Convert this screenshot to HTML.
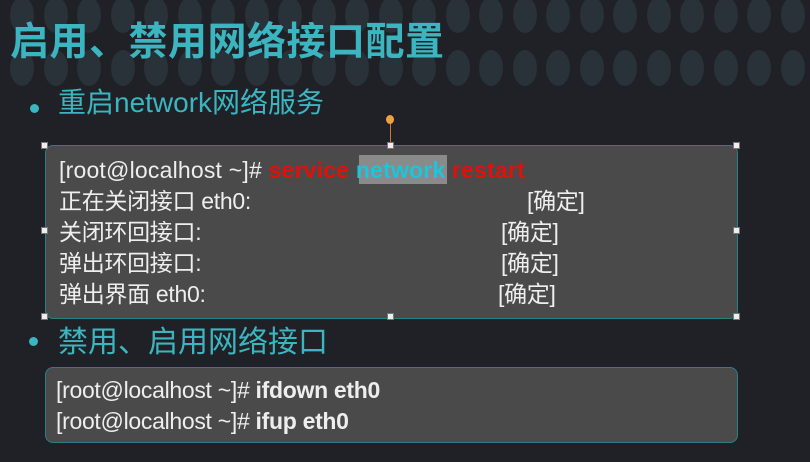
<!DOCTYPE html>
<html><head><meta charset="utf-8"><style>
body{margin:0;width:810px;height:462px;background:#202126;position:relative;overflow:hidden;font-family:"Liberation Sans Narrow","Liberation Sans","Noto Sans CJK SC",sans-serif}
.c{position:absolute;width:24px;height:36px;border-radius:50%;background:#283238}
.t{position:absolute;white-space:nowrap}
.box{position:absolute;background:#4a4a4a;border:1px solid #2a7f86;border-radius:8px}
.ln{position:absolute;color:#eee;font-size:23px;white-space:nowrap;line-height:26px;letter-spacing:-0.3px}
.h{position:absolute;width:5px;height:5px;background:#eee;border:1px solid #777}
.dot{position:absolute;width:9px;height:9px;border-radius:50%;background:#3bb5c0}
</style></head><body>
<div id="circ"></div>
<script>
var s='';for(var r=0;r<2;r++)for(var k=0;k<25;k++){s+='<div class="c" style="left:'+(10+k*33.5)+'px;top:'+(r?50:-3)+'px"></div>';}
document.getElementById('circ').innerHTML=s;
</script>
<div class="t" style="left:10px;top:14px;font-size:39px;font-weight:bold;color:#3bb5c0;font-family:'Noto Sans CJK SC',sans-serif;line-height:50px;letter-spacing:0.5px">启用、禁用网络接口配置</div>
<div class="dot" style="left:30px;top:104px"></div>
<div class="t" style="left:58px;top:85px;font-size:28px;color:#3bb5c0;font-family:'Liberation Sans','Noto Sans CJK SC',sans-serif;line-height:36px">重启network网络服务</div>
<div style="position:absolute;left:390px;top:122px;width:1px;height:24px;background:#c87a30"></div>
<div style="position:absolute;left:386px;top:115px;width:8px;height:9px;border-radius:50%;background:#f0a040"></div>
<div class="box" style="left:45px;top:145px;width:691px;height:172px"></div>
<div class="h" style="left:41px;top:142px"></div><div class="h" style="left:387px;top:142px"></div><div class="h" style="left:733px;top:142px"></div>
<div class="h" style="left:41px;top:227px"></div><div class="h" style="left:733px;top:227px"></div>
<div class="h" style="left:41px;top:313px"></div><div class="h" style="left:387px;top:313px"></div><div class="h" style="left:733px;top:313px"></div>
<div style="position:absolute;left:359px;top:155px;width:88px;height:29px;background:#8a8a8a"></div>
<div class="ln" style="left:59px;top:157px;letter-spacing:0.2px">[root@localhost ~]# <b style="color:#e0100a">service</b> <b style="color:#19c6dc">network</b> <b style="color:#e0100a">restart</b></div>
<div class="ln" style="left:59px;top:188px">正在关闭接口 eth0:</div><div class="ln" style="left:527px;top:188px">[确定]</div>
<div class="ln" style="left:59px;top:219px">关闭环回接口:</div><div class="ln" style="left:501px;top:219px">[确定]</div>
<div class="ln" style="left:59px;top:250px">弹出环回接口:</div><div class="ln" style="left:501px;top:250px">[确定]</div>
<div class="ln" style="left:59px;top:281px">弹出界面 eth0:</div><div class="ln" style="left:498px;top:281px">[确定]</div>
<div class="dot" style="left:29px;top:337px"></div>
<div class="t" style="left:58px;top:320px;font-size:30px;color:#3bb5c0;font-family:'Noto Sans CJK SC',sans-serif;line-height:38px">禁用、启用网络接口</div>
<div class="box" style="left:45px;top:367px;width:691px;height:74px"></div>
<div class="ln" style="left:56px;top:377px">[root@localhost ~]# <b>ifdown eth0</b></div>
<div class="ln" style="left:56px;top:408px">[root@localhost ~]# <b>ifup eth0</b></div>
</body></html>
